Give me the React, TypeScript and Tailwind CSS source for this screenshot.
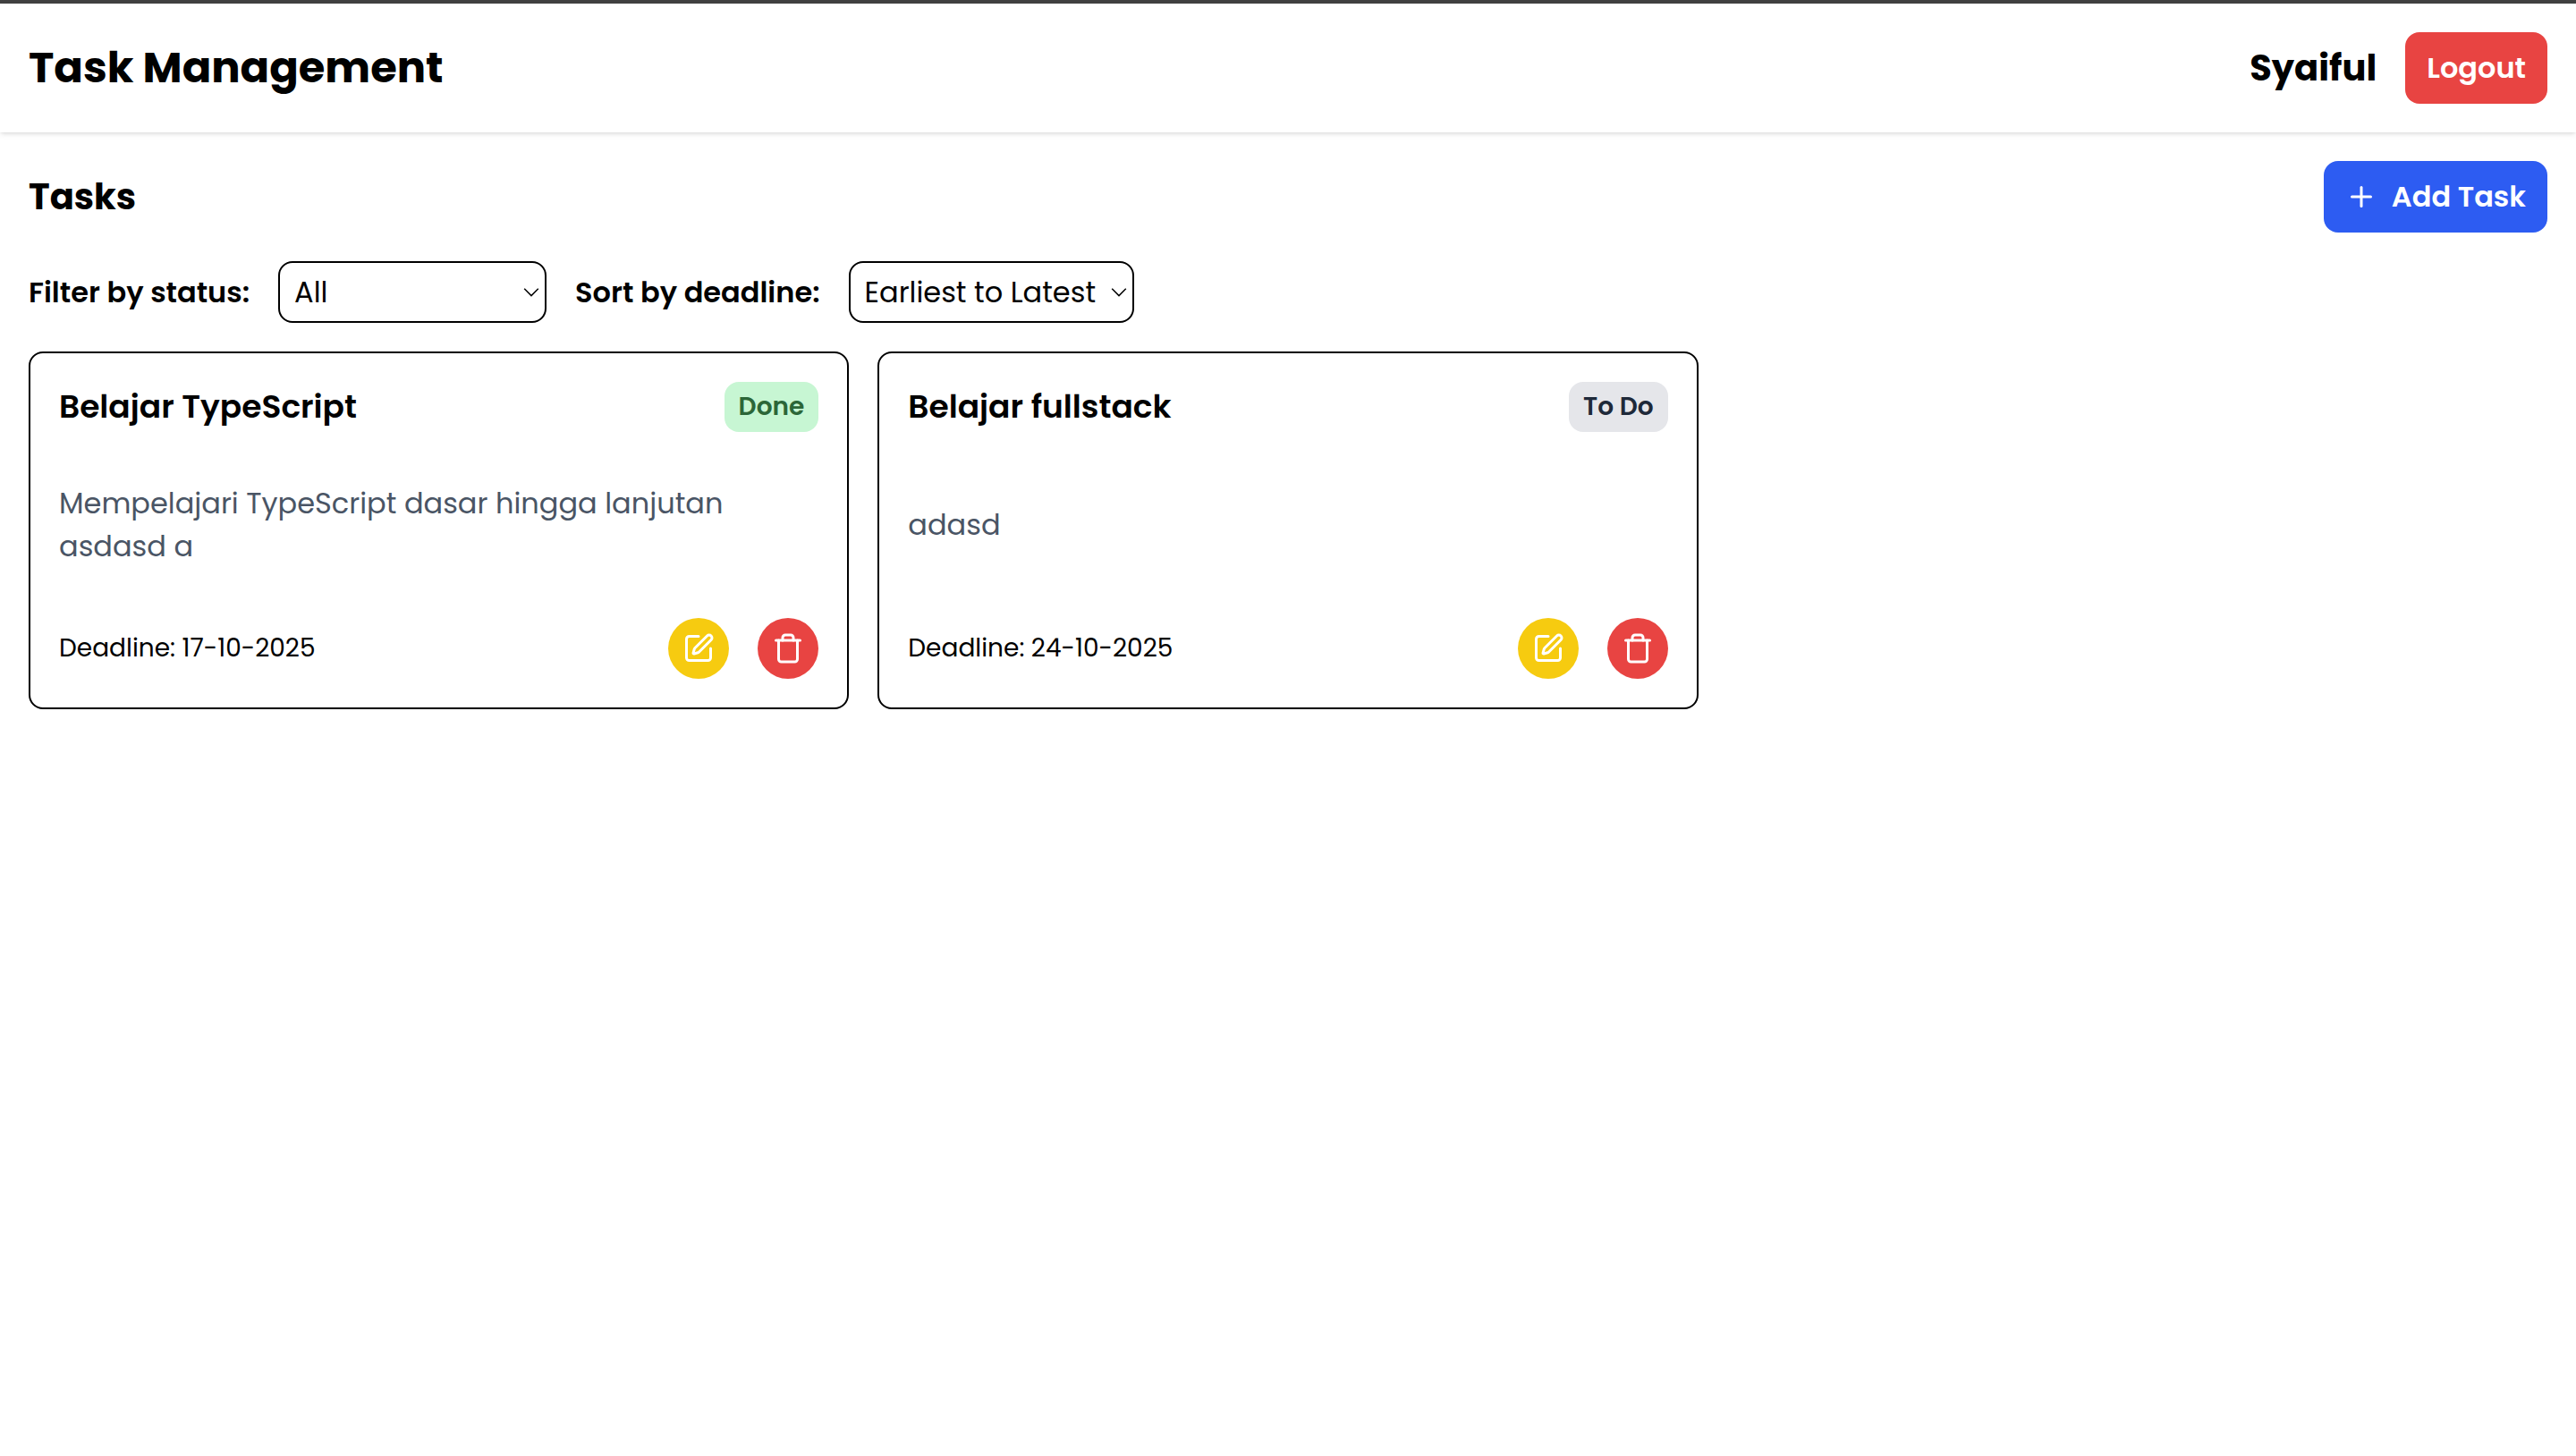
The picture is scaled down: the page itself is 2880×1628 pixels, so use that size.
import { Plus, SquarePen, Trash } from "lucide-react";
import type { ReactNode } from "react";

type Task = {
  id: number;
  title: string;
  description: string;
  status: "Done" | "To Do";
  deadline: string;
};

const tasks: Task[] = [
  {
    id: 1,
    title: "Belajar TypeScript",
    description: "Mempelajari TypeScript dasar hingga lanjutan asdasd a",
    status: "Done",
    deadline: "17-10-2025",
  },
  {
    id: 2,
    title: "Belajar fullstack",
    description: "adasd",
    status: "To Do",
    deadline: "24-10-2025",
  },
];

const badgeStyles = {
  Done: "bg-[#c7f6d3] text-[#2c6638]",
  "To Do": "bg-[#e5e6ea] text-[#1e2939]",
};

function FilterSelect({
  id,
  label,
  className,
  children,
}: {
  id: string;
  label: string;
  className: string;
  children: ReactNode;
}) {
  return (
    <>
      <label htmlFor={id} className="text-[32px] leading-[48px] font-semibold">
        {label}
      </label>
      <div className="relative">
        <select
          id={id}
          className={`h-[69px] appearance-none rounded-2xl border-2 border-black bg-white pl-4 text-[32px] leading-[48px] ${className}`}
        >
          {children}
        </select>
        <svg
          viewBox="0 0 18 10"
          className="pointer-events-none absolute top-[30px] right-2 h-[10px] w-[18px]"
          fill="none"
          stroke="black"
          strokeWidth="1.5"
          aria-hidden="true"
        >
          <path d="M1.2 0.8l7.8 7.8 7.8-7.8" />
        </svg>
      </div>
    </>
  );
}

function TaskCard({ task }: { task: Task }) {
  return (
    <article className="flex flex-col gap-8 rounded-2xl border-2 border-black p-8">
      <div className="flex items-center justify-between">
        <h3 className="text-[36px] leading-[56px] font-semibold">{task.title}</h3>
        <span
          className={`rounded-2xl px-4 py-2 text-[28px] leading-[40px] font-semibold ${badgeStyles[task.status]}`}
        >
          {task.status}
        </span>
      </div>
      <div className="flex min-h-36 items-center">
        <p className="text-[32px] leading-[48px] text-[#4a5565]">{task.description}</p>
      </div>
      <div className="flex items-center justify-between">
        <p className="text-[28px] leading-[40px]">Deadline: {task.deadline}</p>
        <div className="flex gap-8">
          <button
            type="button"
            aria-label={`Edit ${task.title}`}
            className="rounded-full bg-[#f6cb10] p-4 text-white"
          >
            <SquarePen size={36} />
          </button>
          <button
            type="button"
            aria-label={`Delete ${task.title}`}
            className="rounded-full bg-[#e84442] p-4 text-white"
          >
            <Trash size={36} />
          </button>
        </div>
      </div>
    </article>
  );
}

export default function App() {
  return (
    <div className="min-h-screen border-t-4 border-[#414141] bg-white font-[Poppins,Inter,sans-serif] text-black">
      <header className="flex items-center justify-between p-8 shadow-[0_2px_6px_rgba(0,0,0,0.1),0_2px_4px_-2px_rgba(0,0,0,0.1)]">
        <h1 className="text-[48px] leading-[64px] font-bold">Task Management</h1>
        <div className="flex items-center gap-8">
          <span className="text-[40px] leading-[56px] font-bold">Syaiful</span>
          <button
            type="button"
            className="rounded-2xl bg-[#e84442] px-6 py-4 text-[32px] leading-[48px] font-semibold text-white"
          >
            Logout
          </button>
        </div>
      </header>
      <main className="flex flex-col gap-8 p-8">
        <div className="flex items-center justify-between">
          <h2 className="text-[40px] leading-[56px] font-bold">Tasks</h2>
          <button
            type="button"
            className="flex items-center gap-4 rounded-2xl bg-[#2d5cf2] px-6 py-4 text-[32px] leading-[48px] font-semibold text-white"
          >
            <Plus size={36} />
            Add Task
          </button>
        </div>
        <div className="flex items-center gap-8">
          <FilterSelect id="status" label="Filter by status:" className="w-[300px]">
            <option>All</option>
            <option>To Do</option>
            <option>In Progress</option>
            <option>Done</option>
          </FilterSelect>
          <FilterSelect id="deadline" label="Sort by deadline:" className="w-[319px]">
            <option>Earliest to Latest</option>
            <option>Latest to Earliest</option>
          </FilterSelect>
        </div>
        <section className="grid grid-cols-3 gap-8">
          {tasks.map((task) => (
            <TaskCard key={task.id} task={task} />
          ))}
        </section>
      </main>
    </div>
  );
}
